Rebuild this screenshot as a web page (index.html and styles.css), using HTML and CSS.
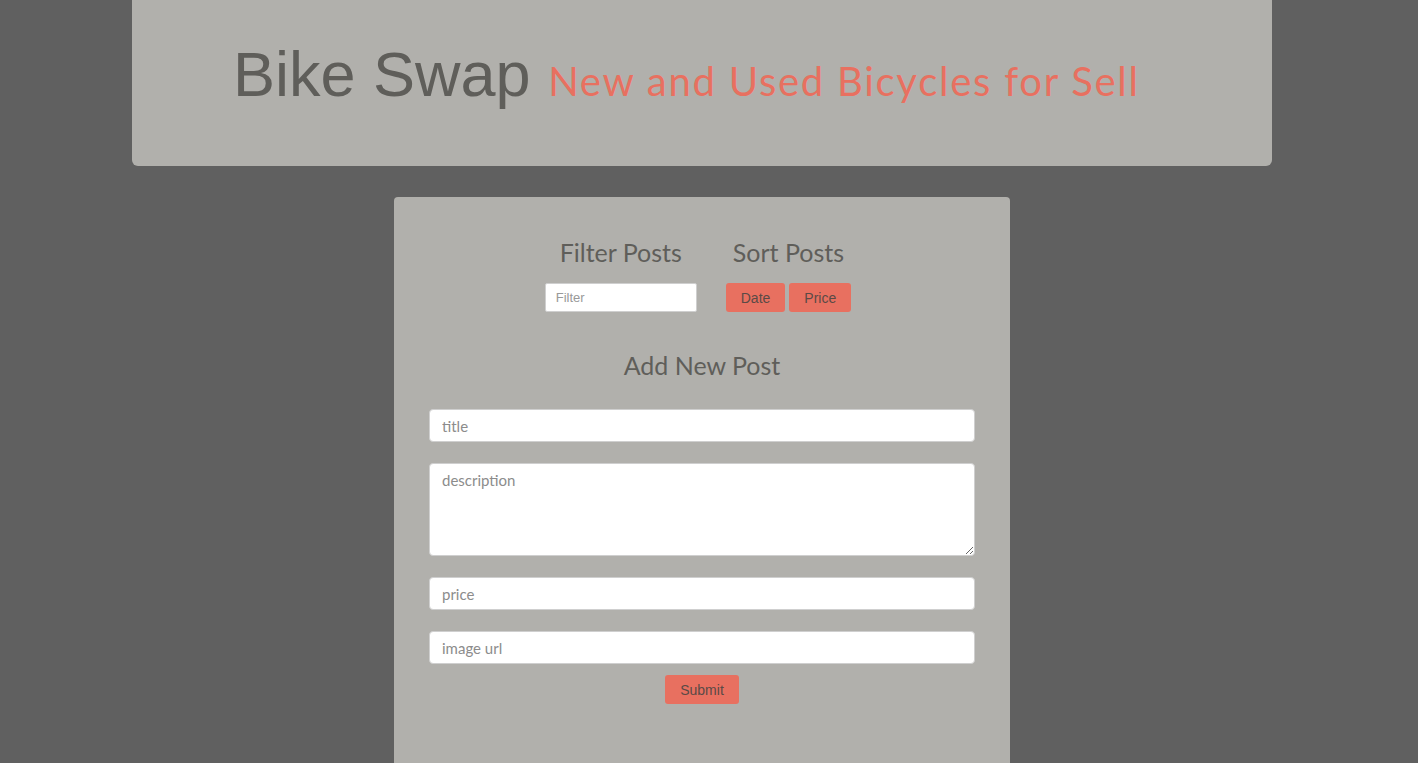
FILE: index.html
```html
<!DOCTYPE html>
<html>
<head>
<meta charset="utf-8">
<title>Bike Swap</title>
<link rel="stylesheet" href="styles.css">
</head>
<body>
<div class="page">
<header class="jumbo">
  <h1 class="brand">Bike Swap <small class="tagline">New and Used Bicycles for Sell</small></h1>
</header>
<main class="card">
  <section class="tools">
    <div class="tool filter">
      <h3 class="tool-title">Filter Posts</h3>
      <input class="filter-input" type="text" placeholder="Filter">
    </div>
    <div class="tool sort">
      <h3 class="tool-title">Sort Posts</h3>
      <div class="btns"><button class="btn btn-date">Date</button><button class="btn btn-price">Price</button></div>
    </div>
  </section>
  <h3 class="add-title">Add New Post</h3>
  <form class="post-form">
    <input class="field" type="text" placeholder="title">
    <textarea class="field area" placeholder="description"></textarea>
    <input class="field" type="text" placeholder="price">
    <input class="field last" type="text" placeholder="image url">
    <button class="btn submit" type="button">Submit</button>
  </form>
</main>
</div>
</body>
</html>
```
FILE: styles.css
```css
html, body {
  margin: 0;
  padding: 0;
}
body {
  background: #606060;
  font-family: "Lato", "Open Sans", sans-serif;
  color: #5f5e5a;
  height: 763px;
  overflow: hidden;
}
.page {
  width: 1404px;
}
.jumbo {
  width: 1140px;
  height: 166px;
  margin: 0 auto;
  background: #b1b0ac;
  border-radius: 0 0 6px 6px;
  box-sizing: border-box;
  padding: 38px 0 0 101px;
}
.brand {
  margin: 0;
  font-family: "Liberation Sans", Arial, sans-serif;
  font-weight: 400;
  font-size: 63px;
  line-height: 72px;
  color: #5f5e5a;
  white-space: nowrap;
}
.tagline {
  font-family: "Lato", sans-serif;
  font-size: 40px;
  color: #e87060;
  margin-left: 0;
  letter-spacing: 1.75px;
}
.card {
  width: 616px;
  margin: 31px auto 0;
  background: #b1b0ac;
  border-radius: 4px 4px 0 0;
  box-sizing: border-box;
  padding: 38px 35px 60px;
  min-height: 580px;
}
.tools {
  display: flex;
  justify-content: center;
  gap: 29px;
  margin-left: -8px;
}
.tool {
  display: flex;
  flex-direction: column;
  align-items: center;
}
.tool-title {
  margin: 0 0 14px;
  font-weight: 400;
  font-size: 25px;
  line-height: 34px;
  color: #5f5e5a;
}
.filter-input {
  width: 152px;
  height: 29px;
  box-sizing: border-box;
  border: 1px solid #cfcfcf;
  border-radius: 2px;
  background: #fff;
  padding: 0 10px;
  font-family: "Liberation Sans", Arial, sans-serif;
  font-size: 13px;
  color: #555;
  outline: none;
}
.filter-input::placeholder { color: #999; }
.btns { display: flex; gap: 4px; }
.btn {
  height: 29px;
  border: none;
  border-radius: 3px;
  background: #e87060;
  color: #5a4a46;
  font-family: "Liberation Sans", Arial, sans-serif;
  font-size: 14px;
  padding: 0 15px;
  cursor: pointer;
}
.add-title {
  margin: 36px 0 0;
  text-align: center;
  font-weight: 400;
  font-size: 25px;
  line-height: 34px;
  color: #5f5e5a;
}
.post-form {
  display: flex;
  flex-direction: column;
  align-items: center;
  gap: 21px;
  margin-top: 27px;
}
.field {
  width: 546px;
  height: 33px;
  box-sizing: border-box;
  border: 1px solid #cfcfcf;
  border-radius: 4px;
  background: #fff;
  padding: 0 12px;
  font-family: "Lato", sans-serif;
  font-size: 15px;
  color: #555;
  outline: none;
  display: block;
  margin: 0;
}
.field::placeholder { color: #8c8c8c; }
.area {
  height: 93px;
  padding: 7px 12px;
  resize: vertical;
}
.last { margin-bottom: -10px; }
.submit {
  width: 74px;
  padding: 0;
}
```
